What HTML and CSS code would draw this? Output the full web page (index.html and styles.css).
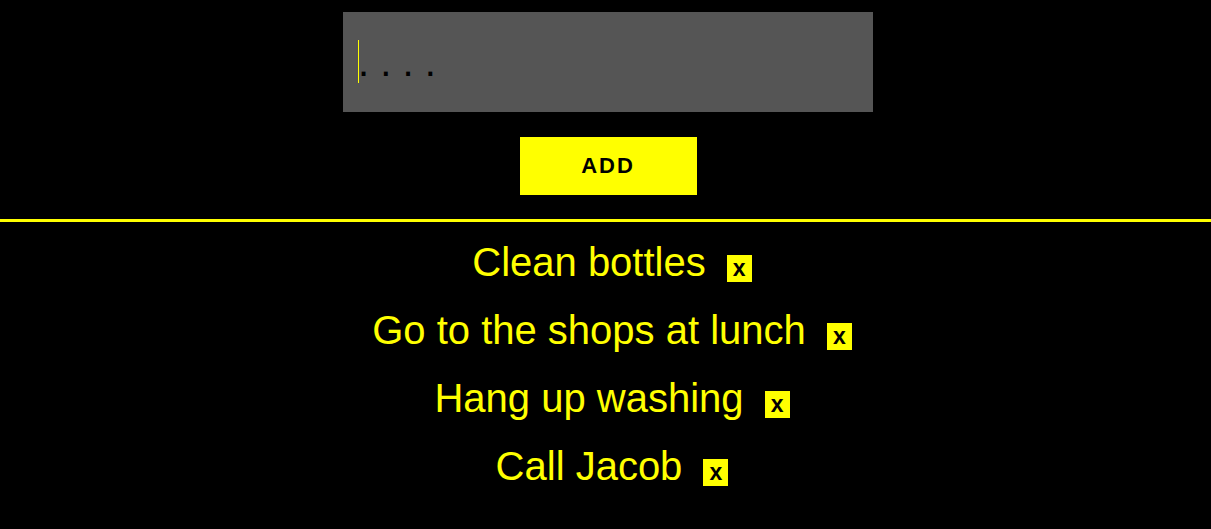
FILE: index.html
```html
<!DOCTYPE html>
<html>
<head>
<meta charset="utf-8">
<link rel="stylesheet" href="styles.css">
</head>
<body>
<form class="add-form">
  <div class="input-wrap">
    <input class="todo-input" type="text" placeholder=". . . ." autofocus>
    <span class="caret"></span>
  </div>
  <button class="add-btn" type="button">ADD</button>
</form>
<div class="divider"></div>
<ul class="todo-list">
  <li class="todo-item"><span class="todo-text">Clean bottles</span><button class="del-btn" type="button">x</button></li>
  <li class="todo-item"><span class="todo-text">Go to the shops at lunch</span><button class="del-btn" type="button">x</button></li>
  <li class="todo-item"><span class="todo-text">Hang up washing</span><button class="del-btn" type="button">x</button></li>
  <li class="todo-item"><span class="todo-text">Call Jacob</span><button class="del-btn" type="button">x</button></li>
</ul>
</body>
</html>
```
FILE: styles.css
```css
html, body {
  margin: 0;
  padding: 0;
  background: #000;
}
body {
  font-family: "Liberation Sans", Arial, sans-serif;
  color: #ffff00;
}
.add-form {
  display: flex;
  flex-direction: column;
  align-items: center;
  padding: 12px 0 0 5px;
  margin: 0;
}
.input-wrap {
  position: relative;
  width: 530px;
  height: 100px;
}
.todo-input {
  box-sizing: border-box;
  width: 530px;
  height: 100px;
  border: none;
  outline: none;
  background: #555555;
  padding: 0 0 0 15px;
  font-family: "Liberation Sans", Arial, sans-serif;
  font-size: 40px;
  color: #ffff00;
  caret-color: transparent;
  display: block;
}
.todo-input::placeholder {
  color: #000;
  opacity: 1;
}
.caret {
  position: absolute;
  left: 15px;
  top: 28px;
  width: 1px;
  height: 43px;
  background: #ffff00;
}
.add-btn {
  margin-top: 25px;
  width: 177px;
  height: 58px;
  border: none;
  background: #ffff00;
  color: #000;
  font-family: "Liberation Sans", Arial, sans-serif;
  font-weight: bold;
  font-size: 22px;
  letter-spacing: 2px;
  padding: 0;
}
.divider {
  margin-top: 24px;
  height: 3px;
  background: #ffff00;
}
.todo-list {
  list-style: none;
  margin: 6px 0 0 0;
  padding: 0 0 0 13px;
  text-align: center;
}
.todo-item {
  font-size: 40px;
  line-height: 68px;
}
.del-btn {
  display: inline-block;
  margin-left: 21px;
  width: 25px;
  height: 27px;
  padding: 0;
  border: none;
  background: #ffff00;
  color: #000;
  font-family: "Liberation Sans", Arial, sans-serif;
  font-weight: bold;
  font-size: 23px;
  line-height: 27px;
  text-align: center;
}
```
